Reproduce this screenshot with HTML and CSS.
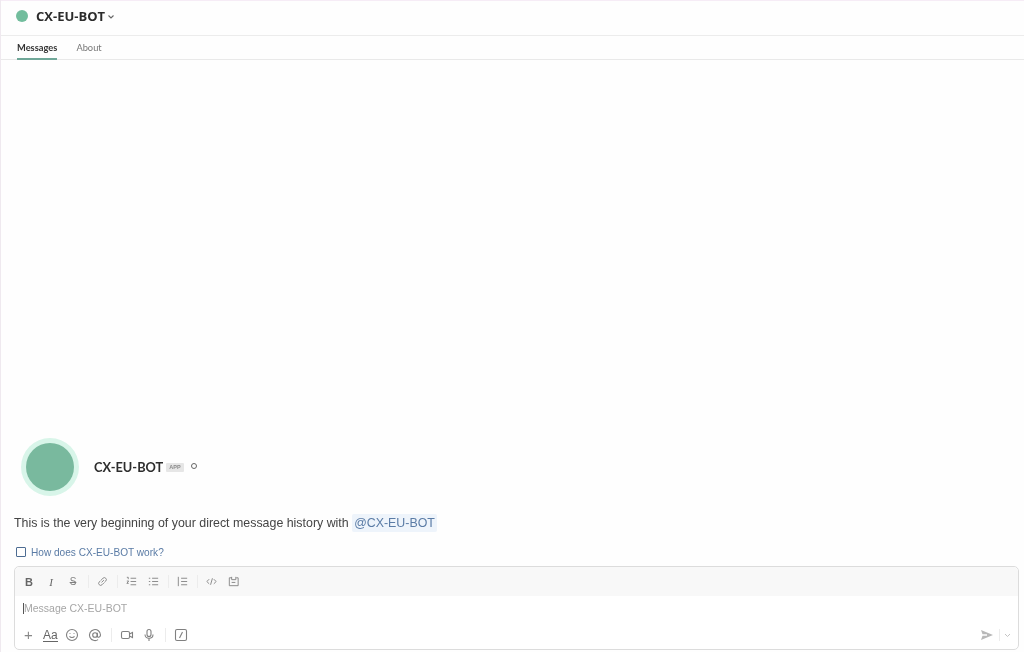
FILE: index.html
```html
<!DOCTYPE html>
<html lang="en">
<head>
<meta charset="utf-8">
<title>CX-EU-BOT</title>
<link rel="stylesheet" href="styles.css">
</head>
<body>
<div class="app">
  <header class="topbar">
    <span class="dot"></span>
    <span class="title">CX-EU-BOT</span>
    <svg class="chev" width="8" height="6" viewBox="0 0 8 6"><path d="M1.500 1.500 4 4 6.500 1.500" fill="none" stroke="#666" stroke-width="1.100"/></svg>
  </header>
  <nav class="tabs">
    <a class="tab active">Messages</a>
    <a class="tab">About</a>
  </nav>
  <main class="history">
    <div class="profile">
      <span class="avatar"></span>
      <span class="name">CX-EU-BOT</span>
      <span class="badge">APP</span>
      <span class="status"></span>
    </div>
    <p class="intro">This is the very beginning of your direct message history with <span class="mention">@CX-EU-BOT</span></p>
    <div class="help"><span class="check"></span><a class="help-link">How does CX-EU-BOT work?</a></div>
  </main>
  <section class="composer">
    <div class="format">
      <span class="fmt bold">B</span>
      <span class="fmt ital">I</span>
      <span class="fmt strike">S</span>
      <i class="sep"></i>
      <svg class="ico" viewBox="0 0 14 14"><path d="M6 8 8.500 5.500M5.500 5.500 7.500 3.500a2.100 2.100 0 0 1 3 3L9 8M8.500 8.500 6.500 10.500a2.100 2.100 0 0 1-3-3L5 6"/></svg>
      <i class="sep"></i>
      <svg class="ico" viewBox="0 0 14 14"><path d="M6 3.500h6M6 7h6M6 10.500h6M2 2.500h1.500v2M2 6.500h2L2 9h2"/></svg>
      <svg class="ico" viewBox="0 0 14 14"><path d="M5.500 3.500h6.500M5.500 7h6.500M5.500 10.500h6.500M2 3.500h1.500M2 7h1.500M2 10.500h1.500"/></svg>
      <i class="sep"></i>
      <svg class="ico" viewBox="0 0 14 14"><path d="M2.500 2v10M5.500 3.500h6.500M5.500 7h6.500M5.500 10.500h6.500"/></svg>
      <i class="sep"></i>
      <svg class="ico" viewBox="0 0 14 14"><path d="M4.500 4.500 2 7l2.500 2.500M9.500 4.500 12 7 9.500 9.500M8 3.500 6 10.500"/></svg>
      <svg class="ico" viewBox="0 0 14 14"><path d="M5 3H2.500v8.500h9.500V3h-2M5 2v3h4.500V2M5 8h4"/></svg>
    </div>
    <div class="input"><span class="caret"></span><span class="placeholder">Message CX-EU-BOT</span></div>
    <div class="actions">
      <span class="plus">+</span>
      <span class="aa">Aa</span>
      <svg class="ico big" viewBox="0 0 14 14"><circle cx="7" cy="7" r="5.500"/><path d="M4.500 8.300c1.200 1.600 3.800 1.600 5 0M5 5.200v.8M9 5.200v.8"/></svg>
      <svg class="ico big" viewBox="0 0 14 14"><circle cx="7" cy="7" r="2.300"/><path d="M9.300 4.700v3.200c0 2 3.200 1.700 3.200-.9a5.500 5.500 0 1 0-2.400 4.600"/></svg>
      <i class="sep tall"></i>
      <svg class="ico big" viewBox="0 0 14 14"><rect x="1.500" y="3.500" width="8" height="7" rx="1.500"/><path d="M9.500 6 12.500 4.500v5L9.500 8"/></svg>
      <svg class="ico big mic" viewBox="0 0 14 14"><rect x="5" y="1.500" width="4" height="7" rx="2"/><path d="M3 6.500c0 5 8 5 8 0M7 10.500v2.500"/></svg>
      <i class="sep tall"></i>
      <svg class="ico big" viewBox="0 0 14 14"><rect x="1.500" y="1.500" width="11" height="11" rx="1.500"/><path d="M8.500 4 5.500 10"/></svg>
      <span class="spacer"></span>
      <svg class="send" width="12" height="10" viewBox="0 0 12 10"><path d="M0 0 12 5 0 10 1.500 5.800H6V4.200H1.500Z" fill="#b8b8b8"/></svg>
      <i class="sep send-sep"></i>
      <svg class="send-chev" width="7" height="5" viewBox="0 0 7 5"><path d="M1 1 3.500 3.500 6 1" fill="none" stroke="#c4c4c4" stroke-width="1"/></svg>
    </div>
  </section>
</div>
</body>
</html>
```
FILE: styles.css
```css
* { box-sizing: border-box; }
html, body { margin: 0; height: 100%; background: #fefefe; overflow: hidden; }
.app {
  height: 652px;
  display: flex;
  flex-direction: column;
  font-family: "Liberation Sans", Arial, sans-serif;
  color: #333;
  border-left: 1px solid #efe9ef;
  filter: blur(0.6px);
}
.topbar {
  height: 36px;
  flex: none;
  display: flex;
  align-items: center;
  padding: 0 0 4px 15px;
  border-top: 1px solid #f6ecf6;
  border-bottom: 1px solid #ececec;
}
.dot { width: 12px; height: 12px; border-radius: 50%; background: #72bd9d; }
.title { margin-left: 8px; font: 700 13px "Open Sans", sans-serif; color: #2b2b2b; }
.chev { margin-left: 2px; margin-top: 1px; }
.tabs {
  height: 24px;
  flex: none;
  display: flex;
  gap: 19px;
  padding-left: 16px;
  border-bottom: 1px solid #e9e9e9;
}
.tab { font: 400 9.300px/24px "Lato", sans-serif; color: #777; }
.tab.active { color: #333; font-weight: 700; border-bottom: 2px solid #6fa798; height: 24px; }
.history {
  flex: 1;
  display: flex;
  flex-direction: column;
  justify-content: flex-end;
  padding: 0 14px 6px 13px;
  background: #fefefe;
}
.profile { display: flex; align-items: center; padding-left: 7px; }
.avatar {
  width: 48px;
  height: 48px;
  margin: 5px;
  border-radius: 50%;
  background: #79b99e;
  box-shadow: 0 0 0 5px #d8f5e9;
}
.name { margin-left: 15px; font: 700 12.800px "Lato", sans-serif; color: #2d2d2d; }
.badge {
  margin-left: 3px;
  padding: 0 3px;
  height: 9px;
  font: 700 5.500px/9px "Liberation Sans", sans-serif;
  color: #8a8a8a;
  background: #e6e6e6;
  border-radius: 1px;
}
.status {
  margin: -3px 0 0 7px;
  width: 6px;
  height: 6px;
  border-radius: 50%;
  border: 1.300px solid #666;
}
.intro { margin: 18px 0 0 0; font-size: 12.400px; line-height: 18px; color: #444; }
.mention {
  padding: 2px 2px;
  color: #5b7ca6;
  background: #eef4fb;
  border-radius: 2px;
}
.help { display: flex; align-items: center; margin-top: 12px; padding-left: 2px; height: 16px; }
.check { width: 10px; height: 10px; border: 1.500px solid #4d6c92; border-radius: 1px; }
.help-link { margin-left: 5px; font-size: 10.100px; color: #5a7ba5; }
.composer {
  flex: none;
  height: 84px;
  margin: 0 5px 2px 13px;
  border: 1px solid #dcdcdc;
  border-radius: 5px;
  background: #fff;
  display: flex;
  flex-direction: column;
}
.format {
  height: 29px;
  flex: none;
  display: flex;
  align-items: center;
  gap: 6px;
  padding-left: 6px;
  background: #f8f8f8;
  border-radius: 5px 5px 0 0;
}
.fmt { width: 16px; text-align: center; font-size: 11px; color: #666; }
.bold { font-weight: 700; }
.ital { font-family: "Liberation Serif", serif; font-style: italic; }
.strike { text-decoration: line-through; color: #808080; font-size: 10px; }
.sep { width: 1px; height: 13px; margin: 0 -1px 0 1px; background: #ececec; flex: none; }
.ico {
  width: 13px;
  height: 13px;
  flex: none;
  fill: none;
  stroke: #858585;
  stroke-width: 1;
  margin: 0 1.500px;
}
.input { height: 24px; flex: none; display: flex; align-items: center; padding-left: 8px; }
.caret { width: 1px; height: 11px; background: #555; }
.placeholder { font-size: 10.500px; color: #a6a6a6; }
.actions {
  flex: 1;
  display: flex;
  align-items: center;
  gap: 7px;
  padding: 1px 7px 0 8px;
}
.plus { width: 11px; font-size: 15px; line-height: 14px; color: #888; text-align: center; }
.aa { font-size: 12px; color: #666; border-bottom: 1px solid #666; line-height: 12px; margin: 0 -1px 0 2px; }
.ico.big { width: 14px; height: 14px; stroke: #808080; stroke-width: 1.100; margin: 0 1px; }
.ico.big.mic { margin-left: 0; }
.sep.tall { height: 14px; margin: 0 0 0 1px; }
.spacer { flex: 1; }
.sep.send-sep { height: 12px; margin: 0 0 0 -1px; }
.send-chev { margin-left: -3px; }
```
